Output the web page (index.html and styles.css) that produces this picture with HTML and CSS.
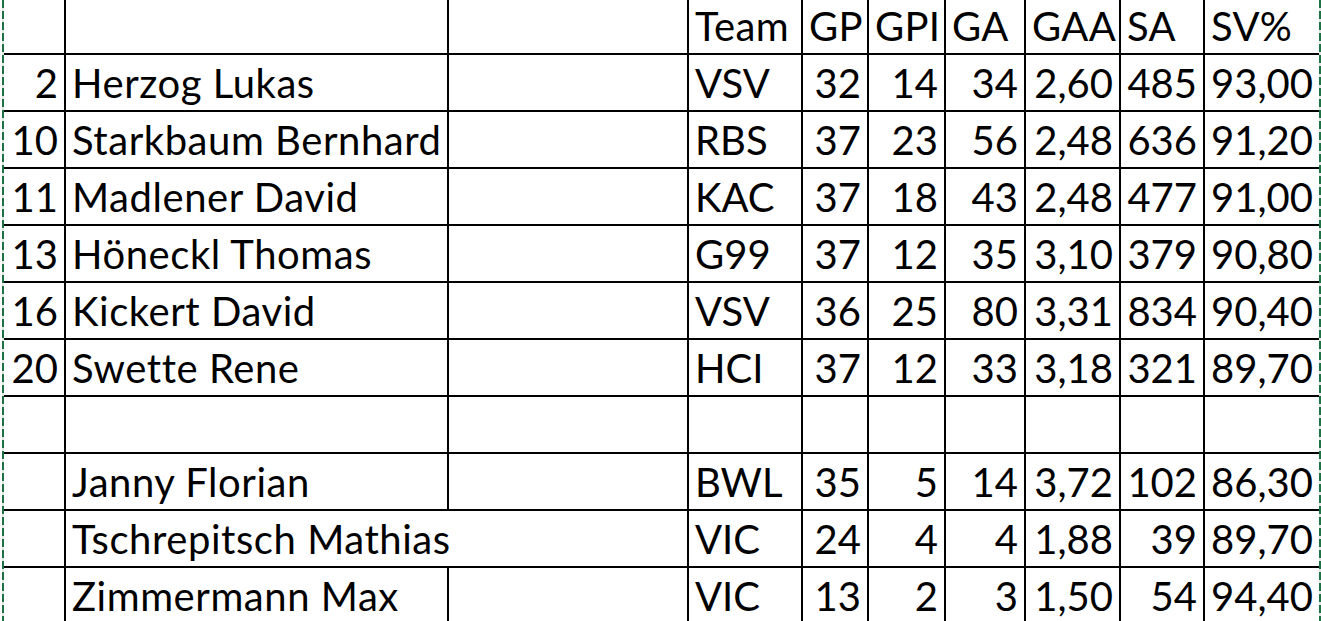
FILE: index.html
```html
<!DOCTYPE html>
<html lang="de">
<head>
<meta charset="utf-8">
<title>Goalie Stats</title>
<link rel="stylesheet" href="styles.css">
</head>
<body>
<div class="sheet">
  <div class="grid">
    <div class="c"></div><div class="c"></div><div class="c"></div><div class="c h">Team</div><div class="c h">GP</div><div class="c h">GPI</div><div class="c h">GA</div><div class="c h">GAA</div><div class="c h">SA</div><div class="c h">SV%</div>

    <div class="c r">2</div><div class="c n">Herzog Lukas</div><div class="c"></div><div class="c">VSV</div><div class="c r">32</div><div class="c r">14</div><div class="c r">34</div><div class="c r">2,60</div><div class="c r">485</div><div class="c r">93,00</div>

    <div class="c r">10</div><div class="c n">Starkbaum Bernhard</div><div class="c"></div><div class="c">RBS</div><div class="c r">37</div><div class="c r">23</div><div class="c r">56</div><div class="c r">2,48</div><div class="c r">636</div><div class="c r">91,20</div>

    <div class="c r">11</div><div class="c n">Madlener David</div><div class="c"></div><div class="c">KAC</div><div class="c r">37</div><div class="c r">18</div><div class="c r">43</div><div class="c r">2,48</div><div class="c r">477</div><div class="c r">91,00</div>

    <div class="c r">13</div><div class="c n">Höneckl Thomas</div><div class="c"></div><div class="c">G99</div><div class="c r">37</div><div class="c r">12</div><div class="c r">35</div><div class="c r">3,10</div><div class="c r">379</div><div class="c r">90,80</div>

    <div class="c r">16</div><div class="c n">Kickert David</div><div class="c"></div><div class="c">VSV</div><div class="c r">36</div><div class="c r">25</div><div class="c r">80</div><div class="c r">3,31</div><div class="c r">834</div><div class="c r">90,40</div>

    <div class="c r">20</div><div class="c n">Swette Rene</div><div class="c"></div><div class="c">HCI</div><div class="c r">37</div><div class="c r">12</div><div class="c r">33</div><div class="c r">3,18</div><div class="c r">321</div><div class="c r">89,70</div>

    <div class="c"></div><div class="c"></div><div class="c"></div><div class="c"></div><div class="c"></div><div class="c"></div><div class="c"></div><div class="c"></div><div class="c"></div><div class="c"></div>

    <div class="c"></div><div class="c n">Janny Florian</div><div class="c"></div><div class="c">BWL</div><div class="c r">35</div><div class="c r">5</div><div class="c r">14</div><div class="c r">3,72</div><div class="c r">102</div><div class="c r">86,30</div>

    <div class="c"></div><div class="c n span2">Tschrepitsch Mathias</div><div class="c">VIC</div><div class="c r">24</div><div class="c r">4</div><div class="c r">4</div><div class="c r">1,88</div><div class="c r">39</div><div class="c r">89,70</div>

    <div class="c"></div><div class="c n">Zimmermann Max</div><div class="c"></div><div class="c">VIC</div><div class="c r">13</div><div class="c r">2</div><div class="c r">3</div><div class="c r">1,50</div><div class="c r">54</div><div class="c r">94,40</div>
  </div>
  <div class="ants ants-left"></div>
  <div class="ants ants-right"></div>
</div>
</body>
</html>
```

FILE: styles.css
```css
html, body {
  margin: 0;
  padding: 0;
  background: #fff;
  overflow: hidden;
}

.sheet {
  position: relative;
  width: 1321px;
  height: 621px;
  overflow: hidden;
}

.grid {
  display: grid;
  grid-template-columns: 60px 381px 238px 112px 64px 75px 78px 93px 82px 114px;
  grid-auto-rows: 55px;
  gap: 2px;
  padding: 2px;
  background: #000;
  width: max-content;
  margin: -4px 0 0 2px;
}

.c {
  background: #fff;
  font-family: Lato, "Open Sans", sans-serif;
  font-size: 40px;
  line-height: 1;
  color: #000;
  display: flex;
  align-items: flex-end;
  padding: 0 6px 7px 6px;
  white-space: nowrap;
  overflow: visible;
}

.n {
  letter-spacing: 0.55px;
}

.h {
  letter-spacing: 0.3px;
}

.r {
  justify-content: flex-end;
}

.span2 {
  grid-column: span 2;
}

.ants {
  position: absolute;
  top: 0;
  width: 2px;
  height: 621px;
  background: repeating-linear-gradient(to bottom, #1e7145 0 8px, #e4e4e4 8px 11px);
}

.ants-left {
  left: 2px;
}

.ants-right {
  left: 1319px;
}
```
